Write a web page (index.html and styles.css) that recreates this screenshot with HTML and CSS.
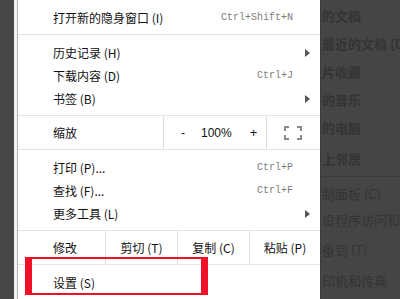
FILE: index.html
```html
<!DOCTYPE html>
<html>
<head>
<meta charset="utf-8">
<link rel="stylesheet" href="styles.css">
</head>
<body>
<div class="screen">
  <div class="left-dark"></div>
  <div class="left-light"></div>
  <div class="menu">
    <div class="group">
      <div class="item"><span class="label">打开新的隐身窗口 (I)</span><span class="key">Ctrl+Shift+N</span><span class="arrow"></span></div>
    </div>
    <div class="group">
      <div class="item"><span class="label">历史记录 (H)</span><span class="key"></span><span class="arrow"><i class="tri"></i></span></div>
      <div class="item"><span class="label">下载内容 (D)</span><span class="key">Ctrl+J</span><span class="arrow"></span></div>
      <div class="item"><span class="label">书签 (B)</span><span class="key"></span><span class="arrow"><i class="tri"></i></span></div>
    </div>
    <div class="zoom-row">
      <div class="zoom-label">缩放</div>
      <div class="zoom-ctrl"><span class="minus">-</span><span class="pct">100%</span><span class="plus">+</span></div>
      <div class="zoom-full">
        <svg width="18" height="14" viewBox="0 0 18 14" fill="none" stroke="#8a8a8a" stroke-width="2">
          <path d="M1 5V1H5"/><path d="M13 1H17V5"/><path d="M17 9V13H13"/><path d="M5 13H1V9"/>
        </svg>
      </div>
    </div>
    <div class="group">
      <div class="item"><span class="label">打印 (P)...</span><span class="key">Ctrl+P</span><span class="arrow"></span></div>
      <div class="item"><span class="label">查找 (F)...</span><span class="key">Ctrl+F</span><span class="arrow"></span></div>
      <div class="item"><span class="label">更多工具 (L)</span><span class="key"></span><span class="arrow"><i class="tri"></i></span></div>
    </div>
    <div class="edit-row">
      <div class="edit-label">修改</div>
      <div class="edit-cell">剪切 (T)</div>
      <div class="edit-cell">复制 (C)</div>
      <div class="edit-cell last">粘贴 (P)</div>
    </div>
    <div class="group">
      <div class="item"><span class="label">设置 (S)</span><span class="key"></span><span class="arrow"></span></div>
      <div class="item"><span class="label">帮助 (H)</span><span class="key"></span><span class="arrow"><i class="tri"></i></span></div>
    </div>
  </div>
  <div class="right-dark">
    <div class="rd r1">的文档</div>
    <div class="rd r2">最近的文档 (D)</div>
    <div class="rd r3">片收藏</div>
    <div class="rd r4">的音乐</div>
    <div class="rd r5">的电脑</div>
    <div class="rd r6">上邻居</div>
    <div class="rd-sep"></div>
    <div class="rd r7">制面板 (C)</div>
    <div class="rd r8">设程序访问和默认</div>
    <div class="rd r9">备到 (T)</div>
    <div class="rd r10">印机和传真</div>
  </div>
  <div class="highlight"></div>
</div>
</body>
</html>
```
FILE: styles.css
```css
html, body {
  margin: 0;
  padding: 0;
  background: #454545;
  overflow: hidden;
}
.screen {
  position: relative;
  width: 400px;
  height: 299px;
  display: flex;
  overflow: hidden;
  font-family: "Noto Sans CJK SC", "Noto Sans", sans-serif;
}
.left-dark {
  width: 14px;
  background: #464646;
  flex: none;
}
.left-light {
  width: 3px;
  background: #f2f2f2;
  flex: none;
}
.menu {
  width: 302px;
  flex: none;
  background: #fff;
  border-left: 1px solid #b4b4b4;
  color: #111;
  font-size: 12px;
}
.group {
  padding: 6px 0 5px;
  border-bottom: 1px solid #e4e4e4;
}
.item {
  display: flex;
  align-items: center;
  height: 23px;
  padding-left: 35px;
}
.label {
  flex: 1;
  white-space: nowrap;
}
.key {
  font-family: "Liberation Mono", "DejaVu Sans Mono", monospace;
  font-size: 10px;
  color: #7c7c7c;
}
.arrow {
  width: 27px;
  display: flex;
  align-items: center;
  padding-left: 12px;
  box-sizing: border-box;
}
.tri {
  display: block;
  width: 0;
  height: 0;
  border-top: 4px solid transparent;
  border-bottom: 4px solid transparent;
  border-left: 5px solid #555;
}
.zoom-row {
  display: flex;
  height: 33px;
  border-bottom: 1px solid #e4e4e4;
}
.zoom-label {
  width: 110px;
  padding-left: 35px;
  display: flex;
  align-items: center;
  border-right: 1px solid #dcdcdc;
}
.zoom-ctrl {
  width: 102px;
  display: flex;
  align-items: center;
  border-right: 1px solid #dcdcdc;
  font-family: "Liberation Sans", Arial, sans-serif;
  font-size: 12px;
}
.minus { margin-left: 17px; }
.pct { margin-left: 16px; }
.plus { margin-left: 18px; font-size: 13px; }
.zoom-full {
  flex: 1;
  display: flex;
  align-items: center;
  padding-left: 17px;
}
.edit-row {
  display: flex;
  height: 33px;
  border-bottom: 1px solid #e4e4e4;
}
.edit-label {
  width: 52px;
  padding-left: 35px;
  display: flex;
  align-items: center;
  border-right: 1px solid #dcdcdc;
}
.edit-cell {
  width: 71px;
  display: flex;
  align-items: center;
  justify-content: center;
  border-right: 1px solid #dcdcdc;
}
.edit-cell.last {
  flex: 1;
  border-right: none;
}
.right-dark {
  flex: 1;
  overflow: hidden;
  font-size: 13px;
  white-space: nowrap;
  padding-left: 1px;
  border-left: 1px solid #3c3c3c;
}
.rd {
  height: 28px;
  line-height: 28px;
  color: #343434;
  font-weight: 700;
}
.r1 { margin-top: 2px; }
.r6 { height: 30px; line-height: 30px; margin-top: 2px; }
.rd-sep {
  height: 1px;
  background: #3a3a3a;
  margin: 2px 0 3px;
}
.r7 { height: 28px; line-height: 28px; font-weight: 400; margin-top: 3px; }
.r8 { height: 24px; line-height: 24px; font-weight: 400; }
.r9 { height: 32px; line-height: 32px; font-weight: 400; margin-top: 2px; }
.r10 { height: 30px; line-height: 30px; font-weight: 400; }
.highlight {
  position: absolute;
  left: 25px;
  top: 257px;
  width: 183px;
  height: 38px;
  box-sizing: border-box;
  border-style: solid;
  border-color: #f0102a;
  border-width: 2px 7px;
}
```
